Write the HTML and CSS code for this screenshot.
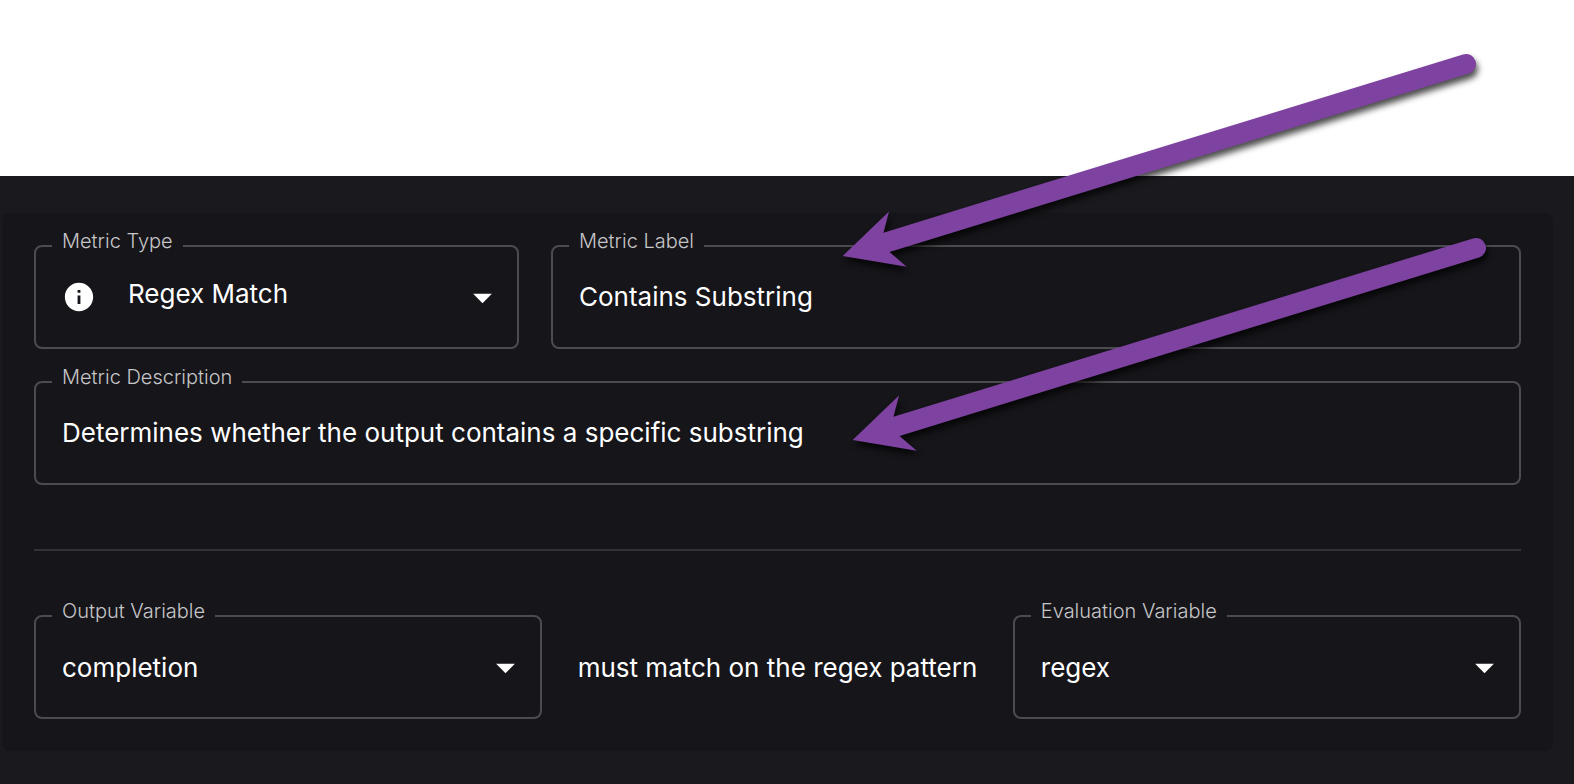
FILE: index.html
```html
<!DOCTYPE html>
<html lang="en">
<head>
  <title>Metric Editor</title>
  <meta charset="UTF-8">
  <meta name="viewport" content="width=device-width, initial-scale=1">
  <link rel="stylesheet" href="styles.css">
</head>
<body>
  <svg class="sprite" aria-hidden="true">
    <symbol id="caret" viewBox="0 0 24 24"><path d="M7 10l5 5 5-5z"/></symbol>
    <symbol id="arrow" viewBox="0 0 660 240">
      <path d="M12.700 216 L59 171.500 L53.500 192.700 L633 14.400 A10 10 0 0 1 639 33.500 L59.500 212 L76.700 226.700 Z"/>
    </symbol>
  </svg>

  <main class="page">
    <form class="panel">
      <div class="row row-type">
        <div class="field has-icon">
          <label for="metricType">Metric Type</label>
          <svg class="info" viewBox="0 0 24 24" aria-hidden="true">
            <path d="M12 2C6.480 2 2 6.480 2 12s4.480 10 10 10 10-4.480 10-10S17.520 2 12 2zm1 15h-2v-6h2v6zm0-8h-2V7h2v2z"/>
          </svg>
          <select id="metricType">
            <option>Regex Match</option>
          </select>
          <svg class="caret" aria-hidden="true"><use href="#caret"/></svg>
        </div>
        <div class="field">
          <label for="metricLabel">Metric Label</label>
          <input type="text" id="metricLabel" value="Contains Substring">
        </div>
      </div>

      <div class="field">
        <label for="metricDescription">Metric Description</label>
        <input type="text" id="metricDescription" value="Determines whether the output contains a specific substring">
      </div>

      <hr class="divider">

      <div class="row row-match">
        <div class="field">
          <label for="outputVariable">Output Variable</label>
          <select id="outputVariable">
            <option>completion</option>
          </select>
          <svg class="caret" aria-hidden="true"><use href="#caret"/></svg>
        </div>
        <p class="match-text">must match on the regex pattern</p>
        <div class="field">
          <label for="evaluationVariable">Evaluation Variable</label>
          <select id="evaluationVariable">
            <option>regex</option>
          </select>
          <svg class="caret" aria-hidden="true"><use href="#caret"/></svg>
        </div>
      </div>
    </form>
  </main>

  <svg class="pointer pointer-label" aria-hidden="true"><use href="#arrow"/></svg>
  <svg class="pointer pointer-description" aria-hidden="true"><use href="#arrow"/></svg>
</body>
</html>
```
FILE: styles.css
```css
:root {
  --page: #1a191e;
  --panel: #16151a;
  --outline: #4c4b50;
  --divider: #323136;
  --label: #c6c6c8;
  --purple: #7e42a0;
}
* {
  box-sizing: border-box;
}
body {
  margin: 0;
  min-height: 100vh;
  padding-top: 176px;
  display: flex;
  flex-direction: column;
  position: relative;
  background-color: #fff;
  color: #fff;
  font-family: Inter, sans-serif;
  font-size: 26px;
}
.sprite {
  position: absolute;
  width: 0;
  height: 0;
}
.page {
  flex: 1;
  padding: 37px 21px 32px 2px;
  background-color: var(--page);
}
.panel {
  display: flex;
  flex-direction: column;
  gap: 32px;
  padding: 32px;
  border-radius: 8px;
  background-color: var(--panel);
}
.row {
  display: grid;
  gap: 32px;
  align-items: center;
}
.row-type {
  grid-template-columns: 1fr 2fr;
}
.row-match {
  grid-template-columns: 5fr 4fr 5fr;
}
.field {
  position: relative;
  display: flex;
  align-items: center;
  height: 104px;
  border: 2px solid var(--outline);
  border-radius: 8px;
}
.field label {
  position: absolute;
  top: -18px;
  left: 16px;
  padding: 0 10px;
  background-color: var(--panel);
  color: var(--label);
  font-size: 20px;
  font-weight: 300;
  line-height: 24px;
}
.field input,
.field select {
  flex: 1;
  min-width: 0;
  height: 100%;
  margin: 0;
  padding: 0 26px;
  border: none;
  outline: none;
  background: none;
  color: inherit;
  font: inherit;
  -webkit-appearance: none;
  appearance: none;
}
.field input {
  padding-bottom: 2px;
}
.field option {
  background-color: var(--panel);
}
.has-icon select {
  padding: 0 26px 8px 32px;
}
.info {
  width: 34px;
  height: 34px;
  margin-left: 26px;
  fill: #fff;
}
.caret {
  position: absolute;
  right: 12px;
  width: 45px;
  height: 45px;
  fill: #fff;
  pointer-events: none;
}
.divider {
  width: 100%;
  margin: 32px 0;
  border: none;
  border-top: 2px solid var(--divider);
}
.match-text {
  margin: 0;
  text-align: center;
  white-space: nowrap;
}
.pointer {
  position: absolute;
  width: 660px;
  height: 240px;
  overflow: visible;
  fill: var(--purple);
  filter: drop-shadow(2px 5px 3px rgba(0, 0, 0, 0.7));
  pointer-events: none;
}
.pointer-label {
  top: 40px;
  left: 830px;
}
.pointer-description {
  top: 224px;
  left: 840px;
}
```
